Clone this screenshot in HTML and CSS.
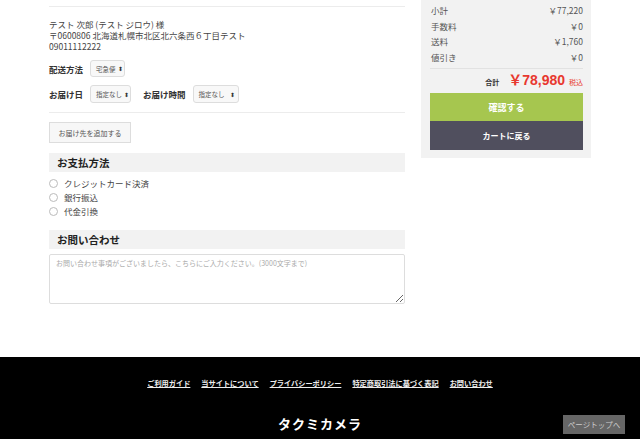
FILE: index.html
```html
<!DOCTYPE html>
<html lang="ja">
<head>
<meta charset="utf-8">
<link rel="stylesheet" href="styles.css">
</head>
<body>
<div class="wrap">
  <main class="main">
    <div class="sep first"></div>
    <div class="address">
      <div>テスト 次郎 (テスト ジロウ) 様</div>
      <div>〒0600806 北海道札幌市北区北六条西６丁目テスト</div>
      <div>09011112222</div>
    </div>
    <div class="row r1">
      <span class="label">配送方法</span>
      <span class="select s1">宅急便<span class="arr">⬍</span></span>
    </div>
    <div class="row r2">
      <span class="label">お届け日</span>
      <span class="select s2">指定なし<span class="arr">⬍</span></span>
      <span class="label l2">お届け時間</span>
      <span class="select s3">指定なし<span class="arr">⬍</span></span>
    </div>
    <div class="sep second"></div>
    <button class="addbtn">お届け先を追加する</button>
    <h2 class="head">お支払方法</h2>
    <ul class="radios">
      <li><span class="radio"></span>クレジットカード決済</li>
      <li><span class="radio"></span>銀行振込</li>
      <li><span class="radio"></span>代金引換</li>
    </ul>
    <h2 class="head h2b">お問い合わせ</h2>
    <textarea class="msg" placeholder="お問い合わせ事項がございましたら、こちらにご入力ください。(3000文字まで)"></textarea>
  </main>
  <aside class="side">
    <div class="sum"><span>小計</span><span>￥77,220</span></div>
    <div class="sum"><span>手数料</span><span>￥0</span></div>
    <div class="sum"><span>送料</span><span>￥1,760</span></div>
    <div class="sum"><span>値引き</span><span>￥0</span></div>
    <div class="total"><span class="tl">合計</span><span class="tv">￥78,980</span><span class="tax">税込</span></div>
    <button class="btn ok">確認する</button>
    <button class="btn back">カートに戻る</button>
  </aside>
</div>
<footer class="foot">
  <nav class="links">
    <a href="#">ご利用ガイド</a>
    <a href="#">当サイトについて</a>
    <a href="#">プライバシーポリシー</a>
    <a href="#">特定商取引法に基づく表記</a>
    <a href="#">お問い合わせ</a>
  </nav>
  <div class="brand">タクミカメラ</div>
  <a class="totop" href="#">ページトップへ</a>
</footer>
</body>
</html>
```

FILE: styles.css
```css
* { box-sizing: border-box; }
html, body { margin: 0; padding: 0; background: #fff; }
body {
  font-family: "Noto Sans CJK JP", "Noto Sans", sans-serif;
  font-size: 8.5px;
  color: #333;
  width: 640px;
}
.wrap {
  width: 542px;
  margin: 0 auto;
  display: flex;
  align-items: flex-start;
  gap: 16px;
  height: 357px;
}
.main { width: 356px; }
.sep { border-top: 1px solid #ececec; }
.sep.first { margin-top: 6px; }
.address { margin-top: 12px; line-height: 11px; color: #444; }
.row { display: flex; align-items: center; }
.r1 { margin-top: 8px; }
.r2 { margin-top: 8px; }
.label { font-weight: bold; font-size: 8.5px; color: #333; margin-right: 7px; }
.l2 { margin-left: 12px; }
.select {
  display: inline-flex; align-items: center; justify-content: space-between;
  height: 18px; padding: 0 3px 0 5px; white-space: nowrap;
  border: 1px solid #ddd; border-radius: 3px; background: #f8f8f8;
  font-size: 6.5px; color: #555;
}
.s1 { width: 35px; height: 17px; }
.s2 { width: 41px; }
.s3 { width: 46px; }
.arr { font-size: 6px; color: #333; margin-left: 2px; }
.second { margin-top: 9px; }
.addbtn {
  display: block; margin-top: 9px;
  width: 82px; height: 21px; padding: 0;
  border: 1px solid #ddd; background: #f7f7f7;
  font-family: inherit; font-size: 7px; color: #555;
}
.head {
  margin: 10px 0 0; height: 19px; padding-left: 8px;
  background: #f2f2f2; font-size: 10.5px; font-weight: bold; color: #222;
  line-height: 19px;
}
.radios { list-style: none; margin: 4px 0 0; padding: 0; }
.radios li { display: flex; align-items: center; height: 14px; color: #444; }
.radio {
  width: 9px; height: 9px; border: 1px solid #bbb; border-radius: 50%;
  margin-right: 6px; background: #fff;
}
.h2b { margin-top: 12px; }
.msg {
  display: block; margin-top: 5px;
  width: 356px; height: 50px; resize: vertical;
  border: 1px solid #ddd; border-radius: 2px;
  padding: 3px 6px; font-family: "Noto Sans CJK JP", sans-serif; font-size: 7px;
}
.msg::placeholder { color: #aaa; }
.side {
  width: 170px; background: #f2f2f2;
  padding: 3px 8px 8px 9px;
}
.sum {
  display: flex; justify-content: space-between;
  line-height: 15.5px; color: #555; padding: 0 0 0 1px;
}
.total {
  border-top: 1px solid #e2e2e2; margin-top: 3px;
  display: flex; justify-content: flex-end; align-items: baseline;
  height: 25px; padding-top: 0;
}
.tl { font-weight: bold; font-size: 7px; color: #333; margin-right: 9px; }
.tv { color: #e8382f; font-size: 14px; font-weight: bold; font-family: "Liberation Sans", "Noto Sans CJK JP", sans-serif; }
.tax { color: #e8382f; font-size: 7px; margin-left: 4px; }
.btn {
  display: block; width: 153px; height: 29px; border: 0; padding: 0;
  color: #fff; font-family: inherit; font-weight: bold; font-size: 8px;
}
.ok { background: #a6c64f; font-size: 9px; height: 28px; }
.back { background: #504f5e; }
.foot {
  position: relative;
  background: #000; height: 82px;
  text-align: center;
}
.links {
  display: flex; justify-content: center; gap: 11px;
  padding-top: 21px; font-size: 7.2px;
}
.links a { color: #eee; text-decoration: underline; font-weight: bold; }
.brand {
  margin-top: 26px; color: #fff; font-weight: bold; font-size: 13px; letter-spacing: 1px;
}
.totop {
  position: absolute; right: 15px; top: 58px;
  width: 62px; height: 19px; line-height: 19px;
  background: #666; color: #ccc; font-size: 7.5px; text-decoration: none;
}
```
